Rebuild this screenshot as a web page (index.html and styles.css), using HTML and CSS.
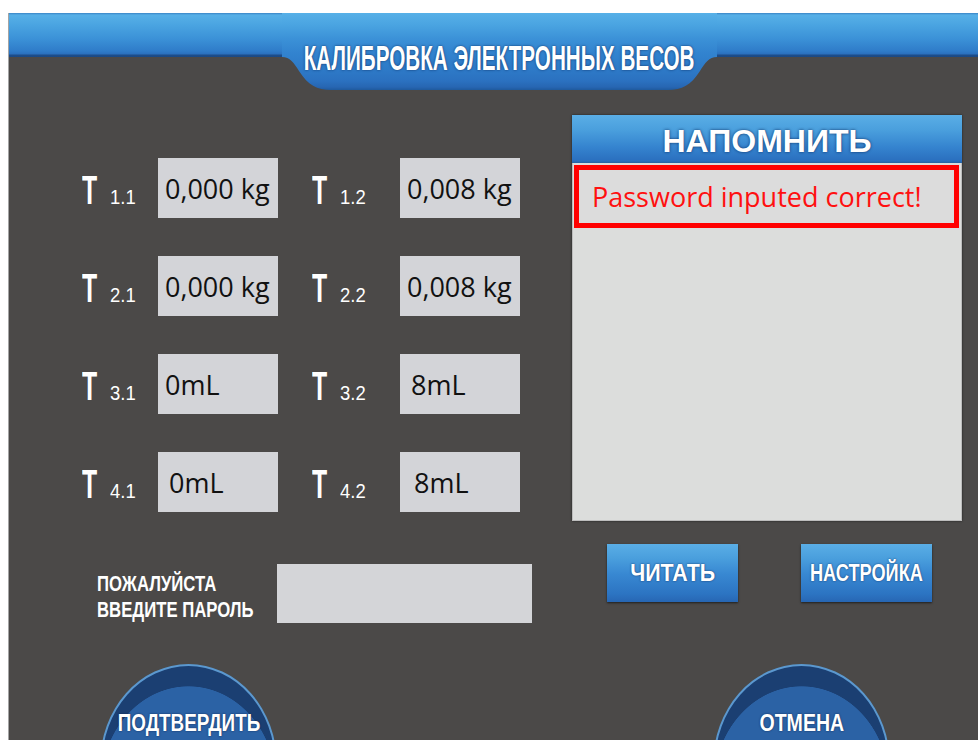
FILE: index.html
```html
<!DOCTYPE html>
<html lang="ru">
<head>
<meta charset="utf-8">
<title>Калибровка электронных весов</title>
<link rel="stylesheet" href="styles.css">
</head>
<body>
<div class="screen">
  <header class="titlebar">
    <div class="title-tab"><span class="title-text">КАЛИБРОВКА ЭЛЕКТРОННЫХ ВЕСОВ</span></div>
  </header>

  <main class="main">
    <section class="readings">
      <div class="grid">
        <div class="tag"><span class="t">T</span><span class="sub">1.1</span></div>
        <div class="field">0,000 kg</div>
        <div class="tag tag-right"><span class="t">T</span><span class="sub">1.2</span></div>
        <div class="field">0,008 kg</div>

        <div class="tag"><span class="t">T</span><span class="sub">2.1</span></div>
        <div class="field">0,000 kg</div>
        <div class="tag tag-right"><span class="t">T</span><span class="sub">2.2</span></div>
        <div class="field">0,008 kg</div>

        <div class="tag"><span class="t">T</span><span class="sub">3.1</span></div>
        <div class="field">0mL</div>
        <div class="tag tag-right"><span class="t">T</span><span class="sub">3.2</span></div>
        <div class="field field-in1">8mL</div>

        <div class="tag"><span class="t">T</span><span class="sub">4.1</span></div>
        <div class="field field-in1">0mL</div>
        <div class="tag tag-right"><span class="t">T</span><span class="sub">4.2</span></div>
        <div class="field field-in2">8mL</div>
      </div>

      <div class="password">
        <div class="pw-label">
          <span class="pw-line">ПОЖАЛУЙСТА</span>
          <span class="pw-line">ВВЕДИТЕ ПАРОЛЬ</span>
        </div>
        <div class="pw-input"></div>
      </div>
    </section>

    <aside class="notice">
      <div class="panel">
        <div class="panel-head">НАПОМНИТЬ</div>
        <div class="panel-body">
          <div class="msg">Password inputed correct!</div>
        </div>
      </div>
      <div class="actions">
        <button class="btn"><span class="btn-text btn-read">ЧИТАТЬ</span></button>
        <button class="btn"><span class="btn-text btn-setup">НАСТРОЙКА</span></button>
      </div>
    </aside>
  </main>

  <footer class="domes">
    <button class="dome"><span class="dome-text dome-ok">ПОДТВЕРДИТЬ</span></button>
    <button class="dome"><span class="dome-text dome-cancel">ОТМЕНА</span></button>
  </footer>
</div>
</body>
</html>
```

FILE: styles.css
```css
* { box-sizing: border-box; }

html, body {
  margin: 0;
  padding: 0;
  background: #ffffff;
  overflow: hidden;
  font-family: "Liberation Sans", Arial, sans-serif;
}

/* device screen */
.screen {
  margin: 13px 0 0 8px;
  height: 760px;
  background: #4b4948;
  border-left: 1px solid #a4a4a4;
}

/* top bar with the centred title tab */
.titlebar {
  height: 77px;
  display: flex;
  padding-left: 273px;
  background: linear-gradient(to bottom,
    #3a84c6 0, #57b0e7 2px, #4aa4e1 12px, #3b91d7 26px,
    #2f7cc9 38px, #2b70bd 41px, #1d4d8a 42px, #1b4884 44px, transparent 44px);
}

.title-tab {
  width: 435px;
  height: 77px;
  padding-top: 28px;
  display: flex;
  justify-content: center;
  align-items: flex-start;
  clip-path: path('M0,0 H435 V44 C427,44 423,50 418,58 C409,72 400,77 386,77 H49 C35,77 26,72 17,58 C12,50 8,44 0,44 Z');
  background: linear-gradient(to bottom,
    #57b0e7 0, #4aa4e1 12px, #3b91d7 26px, #3283cf 40px,
    #2e7bc8 55px, #2b71c0 68px, #2766b2 74px, #1f5a9e 77px);
}

.title-text {
  display: inline-block;
  flex: none;
  font-size: 35px;
  line-height: 34px;
  font-weight: bold;
  color: #ffffff;
  white-space: nowrap;
  transform: scaleX(0.59);
  text-shadow: 0 0 3px rgba(10, 40, 90, 0.9);
}

/* main area */
.main {
  display: flex;
  gap: 40px;
  padding-left: 73px;
}

.readings {
  width: 450px;
  padding-top: 68px;
}

.grid {
  display: grid;
  grid-template-columns: 76px 120px 122px 120px;
  grid-auto-rows: 60px;
  row-gap: 38px;
}

.tag {
  display: flex;
  align-items: baseline;
  padding-top: 12px;
  color: #ffffff;
  white-space: nowrap;
}

.tag-right { padding-left: 34px; }

.t {
  display: inline-block;
  width: 25px;
  font-size: 40px;
  line-height: 40px;
  font-weight: bold;
  transform: scaleX(0.62);
  transform-origin: left center;
}

.sub {
  display: inline-block;
  margin-left: 3px;
  font-size: 21px;
  transform: scaleX(0.88);
  transform-origin: left center;
}

.field {
  display: flex;
  align-items: center;
  padding-left: 7px;
  background: #d3d4d8;
  font-family: "Open Sans", "Liberation Sans", sans-serif;
  font-size: 27px;
  color: #111111;
}

.field-in1 { padding-left: 11px; }
.field-in2 { padding-left: 14px; }

/* password row */
.password {
  display: flex;
  margin-top: 52px;
  padding-left: 15px;
  height: 59px;
}

.pw-label {
  width: 180px;
  padding-top: 7px;
  display: flex;
  flex-direction: column;
}

.pw-line {
  display: block;
  width: 220px;
  font-size: 22px;
  line-height: 26px;
  font-weight: bold;
  color: #ffffff;
  white-space: nowrap;
  transform: scaleX(0.76);
  transform-origin: left center;
}

.pw-input {
  width: 255px;
  height: 59px;
  background: #d4d5d8;
}

/* reminder panel */
.notice {
  width: 390px;
  padding-top: 25px;
}

.panel {
  box-shadow: 0 0 2px rgba(0, 0, 0, 0.6);
}

.panel-head {
  height: 48px;
  text-align: center;
  font-size: 32px;
  line-height: 52px;
  font-weight: bold;
  color: #ffffff;
  text-shadow: 0 0 3px rgba(10, 40, 90, 0.9);
  background: linear-gradient(to bottom, #5aaee6 0, #4a9fdd 15px, #3584cf 32px, #2a6fbe 46px, #25619f 48px);
}

.panel-body {
  height: 358px;
  padding: 2px 2px 0 1px;
  background: #dcdddc;
  border: 1px solid #bdbdbd;
  border-top: 0;
}

.msg {
  height: 63px;
  display: flex;
  align-items: center;
  padding-left: 13px;
  border: 5px solid #ff0000;
  background: #dcdcdc;
  font-family: "Open Sans", "Liberation Sans", sans-serif;
  font-size: 27px;
  color: #ff1010;
}

.actions {
  display: flex;
  gap: 63px;
  margin-top: 23px;
  padding-left: 35px;
}

.btn {
  width: 131px;
  height: 58px;
  padding: 0;
  border: 0;
  display: flex;
  justify-content: center;
  align-items: center;
  color: #ffffff;
  font-family: "Liberation Sans", Arial, sans-serif;
  font-weight: bold;
  font-size: 23px;
  background: linear-gradient(to bottom, #5aaee6 0, #4a9fdd 14px, #3888d2 30px, #2c74c2 50px, #2766b3 58px);
  box-shadow: 0 1px 2px rgba(0, 0, 0, 0.6);
}

.btn-text {
  display: inline-block;
  flex: none;
  white-space: nowrap;
  text-shadow: 0 0 2px rgba(10, 40, 90, 0.9);
}

.btn-read { transform: scaleX(0.93); }
.btn-setup { transform: scaleX(0.79); }

/* round confirm / cancel buttons at the bottom edge */
.domes {
  display: flex;
  justify-content: space-between;
  margin-top: 41px;
  padding: 0 88px 0 91px;
}

.dome {
  width: 177px;
  height: 200px;
  padding: 44px 0 0;
  border: 2px solid #5b98cf;
  border-radius: 50%;
  background: radial-gradient(ellipse 88px 100px at 50% 120px, #2b62a5 99.3%, #1b3f72 100%);
  color: #ffffff;
  font-family: "Liberation Sans", Arial, sans-serif;
  font-weight: bold;
  font-size: 23px;
  line-height: 26px;
  text-align: center;
  display: flex;
  justify-content: center;
  align-items: flex-start;
}

.dome-text {
  display: inline-block;
  flex: none;
  white-space: nowrap;
  text-shadow: 0 0 2px rgba(10, 30, 70, 0.9);
}

.dome-ok { transform: scaleX(0.82); }
.dome-cancel { transform: scaleX(0.85); }
```
